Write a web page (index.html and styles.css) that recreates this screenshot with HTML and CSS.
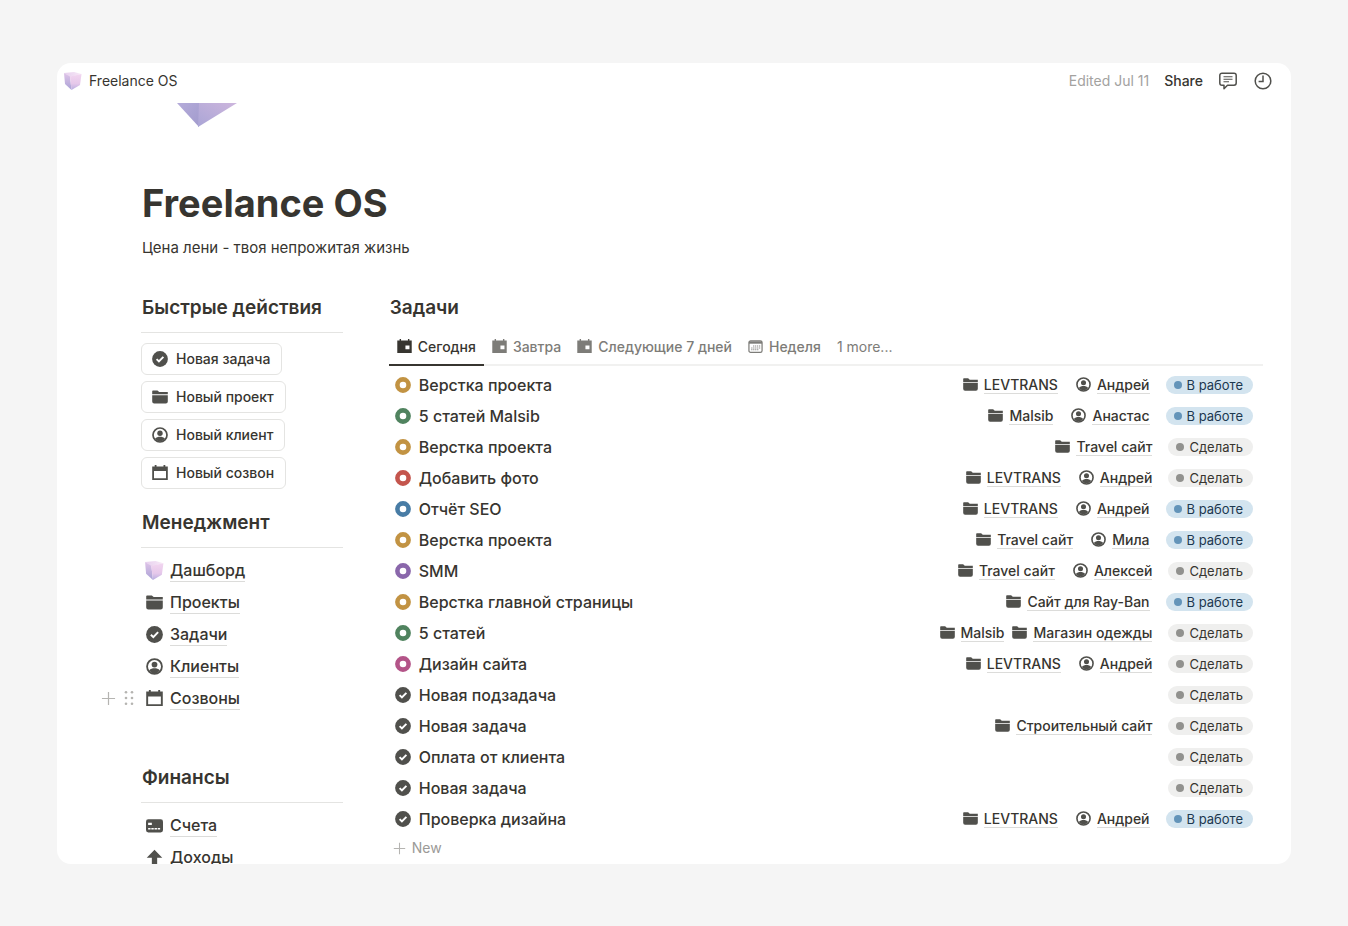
FILE: index.html
```html
<!DOCTYPE html>
<html lang="ru">
<head>
<meta charset="utf-8">
<meta name="viewport" content="width=device-width, initial-scale=1">
<title>Freelance OS</title>
<link rel="stylesheet" href="styles.css">
</head>
<body>
<svg class="sprite" aria-hidden="true">
  <defs>
    <linearGradient id="gem-top" x1="0" y1="0" x2="1" y2="0"><stop offset="0" stop-color="#e6cfee"/><stop offset="1" stop-color="#f8e9f7"/></linearGradient>
    <linearGradient id="gem-left" x1="0" y1="0" x2="0" y2="1"><stop offset="0" stop-color="#dfc4e8"/><stop offset="1" stop-color="#aaa2d6"/></linearGradient>
    <linearGradient id="gem-right" x1="0" y1="0" x2="0" y2="1"><stop offset="0" stop-color="#f2d6f0"/><stop offset="0.6" stop-color="#e6c8ea"/><stop offset="1" stop-color="#b8aee0"/></linearGradient>
    <linearGradient id="tip-left" x1="0" y1="0" x2="1" y2="1"><stop offset="0" stop-color="#b5acda"/><stop offset="1" stop-color="#a29bcd"/></linearGradient>
    <linearGradient id="tip-right" x1="1" y1="0" x2="0" y2="1"><stop offset="0" stop-color="#cdb6dd"/><stop offset="1" stop-color="#aaa5d6"/></linearGradient>
  </defs>
  <symbol id="gem" viewBox="0 0 20 20">
    <path fill="url(#gem-top)" d="M1 2 11 1 18.500 3 7 6Z"/>
    <path fill="url(#gem-left)" d="M1 2 7 5.500 8.500 19 2 13Z"/>
    <path fill="url(#gem-right)" d="M7 5.500 18.500 3 17 14 8.500 19Z"/>
  </symbol>
  <symbol id="folder" viewBox="0 0 16 16">
    <path d="M.2 2.200a.8.8 0 0 1 .8-.8h4.500l1.700 1.500h8.600v2.300H.2Z"/>
    <path d="M.2 6.200h15.600v6.400a2 2 0 0 1-2 2H2.200a2 2 0 0 1-2-2Z"/>
  </symbol>
  <symbol id="check" viewBox="0 0 16 16">
    <circle cx="8" cy="8" r="7.900"/>
    <path d="m4.600 8.200 2.300 2.300 4.500-4.700" fill="none" stroke="#fff" stroke-width="1.900"/>
  </symbol>
  <symbol id="person" viewBox="0 0 16 16">
    <circle cx="8" cy="8" r="7" fill="none" stroke="currentColor" stroke-width="1.700"/>
    <circle cx="8" cy="6.200" r="2.700"/>
    <path d="M3 11.700c1.300-1.600 3.100-2 5-2s3.700.4 5 2A6.500 6.500 0 0 1 8 14.400a6.500 6.500 0 0 1-5-2.700Z"/>
  </symbol>
  <symbol id="calendar" viewBox="0 0 16 16">
    <path fill-rule="evenodd" d="M2.700 0h1.800v1.500h7V0h1.800v1.500H15.800V15H.2V1.500h2.500ZM2 6v7.300h12V6Z"/>
  </symbol>
  <symbol id="day" viewBox="0 0 16 16">
    <path fill-rule="evenodd" d="M2.800 0h1.500v1.700h7.400V0h1.500v1.700h2.500V15H.3V1.700h2.500ZM9 7v4h4.300V7Z"/>
  </symbol>
  <symbol id="week" viewBox="0 0 16 16">
    <rect x="1" y="2" width="14" height="12.300" rx="1.800" fill="none" stroke="currentColor" stroke-width="1.300"/>
    <path d="M1 2.500h14v2.500H1Z"/>
    <path d="M5.500 7.500h7.500M3.500 9.500h9.500M3.500 11.500h7.500" fill="none" stroke="currentColor" stroke-width="1.100" stroke-dasharray="1.200 .9"/>
  </symbol>
  <symbol id="ring" viewBox="0 0 16 16">
    <circle cx="8" cy="8" r="5.600" fill="none" stroke="currentColor" stroke-width="4.600"/>
  </symbol>
  <symbol id="card" viewBox="0 0 16 16">
    <rect y="2" width="16" height="12.500" rx="2.200"/>
    <path d="M2 5.500h3.500v2H2Z" fill="#fff"/>
    <path d="M2 11h12" fill="none" stroke="#fff" stroke-width="1.300" stroke-dasharray="2.300 .7"/>
  </symbol>
  <symbol id="arrow" viewBox="0 0 16 16">
    <path d="M8 .8 15.300 8.200h-4.800V16h-5V8.200H.7Z"/>
  </symbol>
  <symbol id="plus" viewBox="0 0 16 16">
    <path d="M8 1v14M1 8h14" fill="none" stroke="currentColor" stroke-width="1.300"/>
  </symbol>
  <symbol id="grip" viewBox="0 0 10 16">
    <circle cx="2" cy="2.300" r="1.300"/><circle cx="8" cy="2.300" r="1.300"/>
    <circle cx="2" cy="8" r="1.300"/><circle cx="8" cy="8" r="1.300"/>
    <circle cx="2" cy="13.700" r="1.300"/><circle cx="8" cy="13.700" r="1.300"/>
  </symbol>
  <symbol id="comment" viewBox="0 0 20 20">
    <path d="M4 2.200h12a2.200 2.200 0 0 1 2.200 2.200v7.700a2.200 2.200 0 0 1-2.200 2.200H9.500L6 17.800v-3.500H4a2.200 2.200 0 0 1-2.200-2.200V4.400A2.200 2.200 0 0 1 4 2.200Z" fill="none" stroke="currentColor" stroke-width="1.500" stroke-linejoin="round"/>
    <path d="M5.500 5.800h9M5.500 8.300h9M5.500 10.800h5.500" fill="none" stroke="currentColor" stroke-width="1.100"/>
  </symbol>
  <symbol id="clock" viewBox="0 0 20 20">
    <circle cx="10" cy="10" r="7.800" fill="none" stroke="currentColor" stroke-width="1.500"/>
    <path d="M10 4.500V10.400H5.600" fill="none" stroke="currentColor" stroke-width="1.500"/>
  </symbol>
</svg>

<div class="window">
  <header class="topbar">
    <a class="crumb" href="#"><svg class="icon gem"><use href="#gem"/></svg>Freelance OS</a>
    <div class="actions">
      <span class="edited">Edited Jul 11</span>
      <button class="share" type="button">Share</button>
      <button type="button" aria-label="Comments"><svg class="icon tool"><use href="#comment"/></svg></button>
      <button type="button" aria-label="History"><svg class="icon tool"><use href="#clock"/></svg></button>
    </div>
  </header>

  <main class="page">
    <svg class="cover" viewBox="0 0 60 24" aria-hidden="true">
      <path fill="url(#tip-left)" d="M0 0h22v24Z"/>
      <path fill="url(#tip-right)" d="M22 0h38L21 24Z"/>
    </svg>
    <h1>Freelance OS</h1>
    <p class="motto">Цена лени - твоя непрожитая жизнь</p>

    <div class="columns">
      <aside class="side">
        <section class="block">
          <h2>Быстрые действия</h2>
          <div class="quick">
            <button type="button"><svg class="icon"><use href="#check"/></svg>Новая задача</button>
            <button type="button"><svg class="icon"><use href="#folder"/></svg>Новый проект</button>
            <button type="button"><svg class="icon"><use href="#person"/></svg>Новый клиент</button>
            <button type="button"><svg class="icon"><use href="#calendar"/></svg>Новый созвон</button>
          </div>
        </section>
        <section class="block manage">
          <h2>Менеджмент</h2>
          <ul class="links">
            <li><a href="#"><svg class="icon gem"><use href="#gem"/></svg><span>Дашборд</span></a></li>
            <li><a href="#"><svg class="icon"><use href="#folder"/></svg><span>Проекты</span></a></li>
            <li><a href="#"><svg class="icon"><use href="#check"/></svg><span>Задачи</span></a></li>
            <li><a href="#"><svg class="icon"><use href="#person"/></svg><span>Клиенты</span></a></li>
            <li>
              <div class="handles">
                <button type="button" aria-label="Add"><svg class="icon small"><use href="#plus"/></svg></button>
                <button type="button" aria-label="Drag"><svg class="icon grip"><use href="#grip"/></svg></button>
              </div>
              <a href="#"><svg class="icon"><use href="#calendar"/></svg><span>Созвоны</span></a>
            </li>
          </ul>
        </section>
        <section class="block">
          <h2>Финансы</h2>
          <ul class="links">
            <li><a href="#"><svg class="icon"><use href="#card"/></svg><span>Счета</span></a></li>
            <li><a href="#"><svg class="icon"><use href="#arrow"/></svg><span>Доходы</span></a></li>
          </ul>
        </section>
      </aside>

      <section class="tasks">
        <h2>Задачи</h2>
        <nav class="tabs">
          <button class="active" type="button"><svg class="icon small"><use href="#day"/></svg>Сегодня</button>
          <button type="button"><svg class="icon small"><use href="#day"/></svg>Завтра</button>
          <button type="button"><svg class="icon small"><use href="#day"/></svg>Следующие 7 дней</button>
          <button type="button"><svg class="icon small"><use href="#week"/></svg>Неделя</button>
          <button class="more" type="button">1 more...</button>
        </nav>
        <ul class="list">
          <li><a class="task" href="#"><svg class="icon yellow"><use href="#ring"/></svg>Верстка проекта</a>
            <div class="rels"><a href="#"><svg class="icon small"><use href="#folder"/></svg><span>LEVTRANS</span></a></div>
            <div class="rels"><a href="#"><svg class="icon small"><use href="#person"/></svg><span>Андрей</span></a></div>
            <span class="status doing">В работе</span></li>
          <li><a class="task" href="#"><svg class="icon green"><use href="#ring"/></svg>5 статей Malsib</a>
            <div class="rels"><a href="#"><svg class="icon small"><use href="#folder"/></svg><span>Malsib</span></a></div>
            <div class="rels"><a href="#"><svg class="icon small"><use href="#person"/></svg><span>Анастас</span></a></div>
            <span class="status doing">В работе</span></li>
          <li><a class="task" href="#"><svg class="icon yellow"><use href="#ring"/></svg>Верстка проекта</a>
            <div class="rels"><a href="#"><svg class="icon small"><use href="#folder"/></svg><span>Travel сайт</span></a></div>
            <span class="status">Сделать</span></li>
          <li><a class="task" href="#"><svg class="icon red"><use href="#ring"/></svg>Добавить фото</a>
            <div class="rels"><a href="#"><svg class="icon small"><use href="#folder"/></svg><span>LEVTRANS</span></a></div>
            <div class="rels"><a href="#"><svg class="icon small"><use href="#person"/></svg><span>Андрей</span></a></div>
            <span class="status">Сделать</span></li>
          <li><a class="task" href="#"><svg class="icon blue"><use href="#ring"/></svg>Отчёт SEO</a>
            <div class="rels"><a href="#"><svg class="icon small"><use href="#folder"/></svg><span>LEVTRANS</span></a></div>
            <div class="rels"><a href="#"><svg class="icon small"><use href="#person"/></svg><span>Андрей</span></a></div>
            <span class="status doing">В работе</span></li>
          <li><a class="task" href="#"><svg class="icon yellow"><use href="#ring"/></svg>Верстка проекта</a>
            <div class="rels"><a href="#"><svg class="icon small"><use href="#folder"/></svg><span>Travel сайт</span></a></div>
            <div class="rels"><a href="#"><svg class="icon small"><use href="#person"/></svg><span>Мила</span></a></div>
            <span class="status doing">В работе</span></li>
          <li><a class="task" href="#"><svg class="icon purple"><use href="#ring"/></svg>SMM</a>
            <div class="rels"><a href="#"><svg class="icon small"><use href="#folder"/></svg><span>Travel сайт</span></a></div>
            <div class="rels"><a href="#"><svg class="icon small"><use href="#person"/></svg><span>Алексей</span></a></div>
            <span class="status">Сделать</span></li>
          <li><a class="task" href="#"><svg class="icon yellow"><use href="#ring"/></svg>Верстка главной страницы</a>
            <div class="rels"><a href="#"><svg class="icon small"><use href="#folder"/></svg><span>Сайт для Ray-Ban</span></a></div>
            <span class="status doing">В работе</span></li>
          <li><a class="task" href="#"><svg class="icon green"><use href="#ring"/></svg>5 статей</a>
            <div class="rels"><a href="#"><svg class="icon small"><use href="#folder"/></svg><span>Malsib</span></a><a href="#"><svg class="icon small"><use href="#folder"/></svg><span>Магазин одежды</span></a></div>
            <span class="status">Сделать</span></li>
          <li><a class="task" href="#"><svg class="icon pink"><use href="#ring"/></svg>Дизайн сайта</a>
            <div class="rels"><a href="#"><svg class="icon small"><use href="#folder"/></svg><span>LEVTRANS</span></a></div>
            <div class="rels"><a href="#"><svg class="icon small"><use href="#person"/></svg><span>Андрей</span></a></div>
            <span class="status">Сделать</span></li>
          <li><a class="task" href="#"><svg class="icon"><use href="#check"/></svg>Новая подзадача</a>
            <span class="status">Сделать</span></li>
          <li><a class="task" href="#"><svg class="icon"><use href="#check"/></svg>Новая задача</a>
            <div class="rels"><a href="#"><svg class="icon small"><use href="#folder"/></svg><span>Строительный сайт</span></a></div>
            <span class="status">Сделать</span></li>
          <li><a class="task" href="#"><svg class="icon"><use href="#check"/></svg>Оплата от клиента</a>
            <span class="status">Сделать</span></li>
          <li><a class="task" href="#"><svg class="icon"><use href="#check"/></svg>Новая задача</a>
            <span class="status">Сделать</span></li>
          <li><a class="task" href="#"><svg class="icon"><use href="#check"/></svg>Проверка дизайна</a>
            <div class="rels"><a href="#"><svg class="icon small"><use href="#folder"/></svg><span>LEVTRANS</span></a></div>
            <div class="rels"><a href="#"><svg class="icon small"><use href="#person"/></svg><span>Андрей</span></a></div>
            <span class="status doing">В работе</span></li>
        </ul>
        <button class="new" type="button"><svg class="icon tiny"><use href="#plus"/></svg>New</button>
      </section>
    </div>
  </main>
</div>
</body>
</html>
```

FILE: styles.css
```css
* {
  box-sizing: border-box;
}

body {
  display: flex;
  flex-direction: column;
  height: 100vh;
  margin: 0;
  padding: 63px 57px 62px;
  background: #f5f5f5;
  color: #373530;
  font-family: Inter, "Liberation Sans", sans-serif;
  font-size: 16px;
  line-height: 24px;
}

h1,
h2,
p,
ul {
  margin: 0;
  padding: 0;
}

ul {
  list-style: none;
}

a {
  color: inherit;
  text-decoration: none;
}

button {
  padding: 0;
  border: 0;
  background: none;
  color: inherit;
  font: inherit;
  cursor: pointer;
}

.sprite {
  position: absolute;
  width: 0;
  height: 0;
}

.icon {
  display: block;
  flex: none;
  width: 16px;
  height: 16px;
  color: #50504c;
  fill: currentColor;
}

.icon.small {
  width: 15px;
  height: 15px;
}

.icon.tiny {
  width: 13px;
  height: 13px;
}

.icon.tool,
.icon.gem {
  width: 20px;
  height: 20px;
}

.icon.yellow { color: #c29343; }
.icon.green { color: #50835f; }
.icon.red { color: #c4554d; }
.icon.blue { color: #487ca5; }
.icon.purple { color: #8a67ab; }
.icon.pink { color: #b35488; }

.window {
  flex: 1;
  min-height: 0;
  overflow: hidden;
  border-radius: 14px;
  background: #fff;
}

.topbar {
  display: flex;
  align-items: center;
  justify-content: space-between;
  height: 36px;
  padding: 0 18px 0 6px;
  font-size: 14px;
}

.crumb,
.actions {
  display: flex;
  align-items: center;
}

.crumb {
  gap: 6px;
}

.actions {
  gap: 15px;
}

.edited {
  color: #a3a29f;
}

.share {
  font-weight: 500;
}

.page {
  padding: 4px 28px 0 84px;
}

.cover {
  display: block;
  width: 60px;
  height: 24px;
  margin-left: 36px;
}

h1 {
  margin-top: 52px;
  padding-left: 1px;
  font-size: 38px;
  line-height: 48px;
}

.motto {
  margin-top: 9px;
  padding-left: 1px;
  font-size: 15px;
}

.columns {
  display: grid;
  grid-template-columns: 3fr 13fr;
  gap: 46px;
  margin-top: 35px;
}

h2 {
  padding-left: 1px;
  font-size: 19px;
  font-weight: 600;
  line-height: 26px;
  white-space: nowrap;
}

.block h2 {
  padding-bottom: 11px;
  border-bottom: 1px solid #e4e4e2;
}

.quick {
  display: flex;
  flex-direction: column;
  align-items: flex-start;
  gap: 6px;
  padding-top: 10px;
}

.quick button {
  display: flex;
  align-items: center;
  gap: 8px;
  height: 32px;
  padding: 0 11px 0 10px;
  border: 1px solid #e4e4e2;
  border-radius: 6px;
  font-size: 14px;
  font-weight: 500;
}

.manage {
  margin: 21px 0 51px;
}

.links {
  padding: 6px 0 0 5px;
}

.links li {
  position: relative;
}

.links a {
  display: flex;
  align-items: center;
  gap: 7px;
  height: 32px;
  font-weight: 500;
}

.links a .icon {
  width: 17px;
  height: 17px;
}

.links a .gem {
  width: 21px;
  height: 21px;
  margin: 0 -2px;
}

.links span,
.rels span {
  border-bottom: 1px solid #dcdcda;
}

.links span {
  line-height: 22px;
}

.handles {
  position: absolute;
  top: 8px;
  right: 100%;
  display: flex;
  gap: 8px;
  margin-right: 12px;
}

.handles .icon {
  color: #b5b4b1;
}

.icon.grip {
  width: 10px;
}

.tabs {
  display: flex;
  gap: 16px;
  margin-top: 9px;
  padding-left: 8px;
  border-bottom: 2px solid #f1f1f0;
  color: #7d7c78;
  font-size: 14px;
  font-weight: 500;
}

.tabs button {
  display: flex;
  align-items: center;
  gap: 6px;
  height: 34px;
}

.tabs .icon {
  margin-bottom: 2px;
  color: inherit;
}

.tabs .active {
  height: 36px;
  margin: 0 -8px -2px;
  padding: 0 8px;
  border-bottom: 2px solid #373530;
  color: #373530;
}

.tabs .more {
  font-weight: 400;
}

.list {
  padding: 3px 10px 0 6px;
}

.list li {
  display: flex;
  align-items: center;
  height: 31px;
}

.task {
  display: flex;
  flex: 1;
  align-items: center;
  gap: 8px;
  font-weight: 500;
}

.rels,
.rels a {
  display: flex;
  align-items: center;
}

.rels {
  gap: 8px;
  margin-left: 18px;
  font-size: 14px;
  font-weight: 500;
}

.rels a {
  gap: 6px;
}

.rels span {
  line-height: 17px;
}

.status {
  display: flex;
  align-items: center;
  gap: 5px;
  height: 18px;
  margin-left: 16px;
  padding: 0 10px 0 8px;
  border-radius: 9px;
  background: #efefee;
  font-size: 13px;
}

.status::before {
  width: 8px;
  height: 8px;
  border-radius: 50%;
  background: #91918e;
  content: "";
}

.status.doing {
  background: #d3e4ef;
  color: #1c3850;
}

.status.doing::before {
  background: #6394b9;
}

.new {
  display: flex;
  align-items: center;
  gap: 6px;
  height: 28px;
  padding-left: 4px;
  color: #9b9a97;
  font-size: 14px;
}

.new .icon {
  color: #b5b4b1;
}
```
